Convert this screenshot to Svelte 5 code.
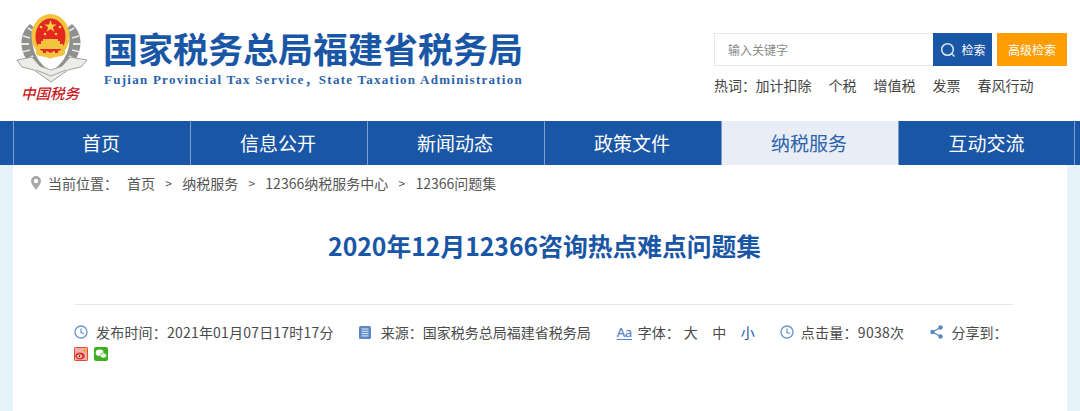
<script>
  const nav = ['首页', '信息公开', '新闻动态', '政策文件', '纳税服务', '互动交流'];
  const hot = ['加计扣除', '个税', '增值税', '发票', '春风行动'];
  const crumbs = ['首页', '纳税服务', '12366纳税服务中心', '12366问题集'];
</script>

<div class="page">
  <header class="head">
    <div class="brand">
      <div class="logo">
        <svg class="emblem" viewBox="0 0 80 76" width="80" height="76" aria-hidden="true">
          <path d="M20 16C8 26 8 46 24 60L36 60C22 48 20 32 25 20Z" fill="#8f918f"/>
          <path d="M62 16C74 26 74 46 58 60L46 60C60 48 62 32 57 20Z" fill="#8f918f"/>
          <path d="M18 20l5 3M13 28l7 2M11 36l8 0M12 44l8-2M16 52l7-4M64 20l-5 3M69 28l-7 2M71 36l-8 0M70 44l-8-2M66 52l-7-4" stroke="#e8e8e6" stroke-width="1.800"/>
          <path d="M7 52L22 49L30 58L41 62L52 58L60 49L77 52L71 59L58 62L41 74L24 62L12 59Z" fill="#ecece9" stroke="#8c8c8a" stroke-width=".8"/>
          <path d="M26 62L41 68L56 62" fill="none" stroke="#a5a5a3" stroke-width="1"/>
          <ellipse cx="40.500" cy="28" rx="19" ry="22" fill="#f3c440"/>
          <ellipse cx="40.500" cy="28.500" rx="15" ry="18" fill="#e5281f"/>
          <path d="M40.500 12l1.500 4.500h4.600l-3.700 2.800 1.400 4.500-3.800-2.800-3.800 2.800 1.400-4.500-3.700-2.800h4.600Z" fill="#f8d24a"/>
          <circle cx="31" cy="19" r="1.300" fill="#f8d24a"/><circle cx="50" cy="19" r="1.300" fill="#f8d24a"/>
          <circle cx="35" cy="26" r="1.300" fill="#f8d24a"/><circle cx="46" cy="26" r="1.300" fill="#f8d24a"/>
          <path d="M33 31h15v2h2v3h3v5H28v-5h3v-3h2Z" fill="#f3c440"/>
          <path d="M26 40c5 5 9 1 14.500 5 5.500-4 9.500 0 14.500-5v6c-5 4-10 1-14.500 5-4.500-4-9.500-1-14.500-5Z" fill="#f3c440"/>
          <path d="M33 42h3v3h-3ZM45 42h3v3h-3Z" fill="#e5281f"/>
        </svg>
        <div class="seal">中国税务</div>
      </div>
      <div class="names">
        <div class="cn">国家税务总局福建省税务局</div>
        <div class="en">Fujian Provincial Tax Service，State Taxation Administration</div>
      </div>
    </div>
    <div class="tools">
      <div class="search">
        <div class="field">输入关键字</div>
        <button class="go">
          <svg viewBox="0 0 16 16" width="16" height="16" aria-hidden="true"><circle cx="7.500" cy="7.500" r="5.800" fill="none" stroke="#dbe6f4" stroke-width="1.500"/><path d="M11.800 11.800l2.700 2.700" stroke="#dbe6f4" stroke-width="1.500"/></svg>
          检索
        </button>
        <button class="adv">高级检索</button>
      </div>
      <div class="hot">
        <span class="hot-label">热词：</span>
        {#each hot as h}<span class="hot-item">{h}</span>{/each}
      </div>
    </div>
  </header>

  <nav class="nav">
    {#each nav as n, i}
      <div class="tab" class:on={i === 4}>{n}</div>
    {/each}
  </nav>

  <main class="sheet">
    <div class="crumbs">
      <svg viewBox="0 0 10 14" width="10" height="14" aria-hidden="true"><path fill-rule="evenodd" d="M5 0a5 5 0 0 1 5 5c0 3-3 6-5 9-2-3-5-6-5-9a5 5 0 0 1 5-5Zm0 2.800a2.200 2.200 0 1 0 0 4.400 2.200 2.200 0 0 0 0-4.400Z" fill="#a8a8a8"/></svg>
      <span class="here">当前位置：</span>
      {#each crumbs as c, i}
        {#if i > 0}<span class="sep">&gt;</span>{/if}
        <span>{c}</span>
      {/each}
    </div>

    <h1 class="title">2020年12月12366咨询热点难点问题集</h1>

    <div class="rule"></div>

    <div class="meta">
      <svg class="ic" viewBox="0 0 14 14" width="14" height="14" aria-hidden="true"><circle cx="7" cy="7" r="6" fill="none" stroke="#6e97cf" stroke-width="1.400"/><path d="M7 3.500V7.500l2.800 1.200" fill="none" stroke="#6e97cf" stroke-width="1.300"/></svg>
      <span class="t1">发布时间：2021年01月07日17时17分</span>
      <svg class="ic m2" viewBox="0 0 12 13" width="12" height="13" aria-hidden="true"><rect width="12" height="13" rx="1.500" fill="#5b87c4"/><path d="M2.500 3h7M2.500 5.300h7M2.500 7.600h7M2.500 9.900h7" stroke="#e8eff8" stroke-width="1"/></svg>
      <span class="t2">来源：国家税务总局福建省税务局</span>
      <span class="aa">Aa</span>
      <span class="t3">字体：</span>
      <span class="size">大</span><span class="size">中</span><span class="size small">小</span>
      <svg class="ic m4" viewBox="0 0 14 14" width="14" height="14" aria-hidden="true"><circle cx="7" cy="7" r="6" fill="none" stroke="#6e97cf" stroke-width="1.400"/><path d="M7 3.500V7.500l2.800 1.200" fill="none" stroke="#6e97cf" stroke-width="1.300"/></svg>
      <span class="t4">点击量：9038次</span>
      <svg class="ic m5" viewBox="0 0 13 14" width="13" height="14" aria-hidden="true"><path d="M10.500 2.500L2.500 7l8 4.500" fill="none" stroke="#5b87c4" stroke-width="1.300"/><circle cx="10.500" cy="2.500" r="2.200" fill="#5b87c4"/><circle cx="2.500" cy="7" r="2.200" fill="#5b87c4"/><circle cx="10.500" cy="11.500" r="2.200" fill="#5b87c4"/></svg>
      <span class="t5">分享到：</span>
    </div>

    <div class="share">
      <svg viewBox="0 0 14 14" width="14" height="14" aria-hidden="true"><rect width="14" height="14" rx="1.500" fill="#f3b0a8"/><rect x=".5" y=".5" width="13" height="13" rx="1" fill="none" stroke="#e2483c"/><circle cx="10.500" cy="3.500" r="2" fill="#f4a64a"/><ellipse cx="6" cy="9" rx="4.800" ry="3.400" fill="#e2332a"/><ellipse cx="5.600" cy="9.200" rx="2.400" ry="1.800" fill="#fff"/><circle cx="5.500" cy="9.300" r="1" fill="#222"/></svg>
      <svg viewBox="0 0 14 14" width="14" height="14" aria-hidden="true"><rect width="14" height="14" rx="2" fill="#3fae1f"/><ellipse cx="5.600" cy="5.800" rx="3.900" ry="3.200" fill="#fff"/><ellipse cx="9.400" cy="8.500" rx="3.200" ry="2.600" fill="#e6f6df" stroke="#3fae1f" stroke-width=".6"/></svg>
    </div>
  </main>
</div>

<style>
  :global(body) { margin: 0; background: #fff; }
  .page {
    width: 1080px;
    height: 411px;
    overflow: hidden;
    background: #e6f3fb;
    font-family: "Noto Sans CJK SC", "Liberation Sans", sans-serif;
    font-size: 14px;
    color: #4a4a4a;
  }
  .head {
    height: 121px;
    box-sizing: border-box;
    background: #fff;
    display: flex;
    justify-content: space-between;
    padding: 0 13px 0 13px;
  }
  .brand { display: flex; }
  .logo { width: 80px; padding-top: 8px; margin-left: -3px; }
  .emblem { display: block; filter: blur(.4px); }
  .seal {
    margin: -3px 0 0 11px;
    width: 60px;
    font: italic 500 14.500px/24px "Noto Sans CJK SC", sans-serif;
    color: #c9161d;
    white-space: nowrap;
  }
  .names { margin-left: 13px; padding-top: 26px; }
  .cn {
    font-size: 35px;
    line-height: 44px;
    font-weight: 700;
    color: #1a56a6;
    white-space: nowrap;
  }
  .en {
    margin: 2px 0 0 1px;
    font: 700 13px/16px "Liberation Serif", "Noto Sans CJK SC", serif;
    letter-spacing: 1.260px;
    color: #2b62ab;
    white-space: nowrap;
  }
  .tools { width: 353px; padding-top: 33px; }
  .search { display: flex; height: 33px; }
  .field {
    width: 219px;
    box-sizing: border-box;
    border: 1px solid #e8e8e8;
    border-right: 0;
    padding-left: 13px;
    font-size: 12px;
    line-height: 31px;
    color: #8a8a8a;
  }
  button {
    border: 0;
    padding: 0;
    margin: 0;
    color: #fff;
    font-family: inherit;
    font-size: 12px;
    cursor: pointer;
  }
  .go {
    width: 59px;
    background: #1a56a6;
    display: flex;
    align-items: center;
    justify-content: center;
    gap: 5px;
    padding-left: 1px;
    box-sizing: border-box;
  }
  .adv { width: 70px; margin-left: 5px; background: #ff9c00; }
  .hot { margin-top: 7px; display: flex; line-height: 24px; white-space: nowrap; color: #444; }
  .hot-label { width: 41.500px; }
  .hot-item { margin-right: 17px; }
  .nav {
    height: 44px;
    background: #1a56a6;
    display: flex;
    padding-left: 13px;
  }
  .tab {
    width: 177px;
    box-sizing: border-box;
    border-left: 1px solid #7e9fcb;
    padding-right: 2px;
    text-align: center;
    font-size: 19px;
    line-height: 44px;
    color: #fff;
  }
  .tab.on { background: #e8edf6; color: #2b62ab; }
  .tab:last-child { border-right: 1px solid #7e9fcb; padding-right: 0; }
  .sheet {
    width: 1054px;
    height: 246px;
    margin-left: 13px;
    background: #fff;
    position: relative;
    overflow: hidden;
  }
  .crumbs {
    display: flex;
    align-items: center;
    height: 35px;
    padding-left: 18px;
    white-space: nowrap;
    line-height: 20px;
    color: #555;
  }
  .here { margin: 0 9px 0 7px; }
  .sep { margin: 0 10.250px; font-size: 12px; }
  .title {
    margin: 29px 0 0;
    padding-left: 9px;
    text-align: center;
    font-size: 24.750px;
    line-height: 32px;
    font-weight: 700;
    color: #1a56a6;
  }
  .rule { margin: 43px 0 0 62px; width: 938px; height: 1px; background: #e6e6e6; }
  .meta {
    display: flex;
    align-items: center;
    margin-top: 17px;
    padding-left: 61px;
    height: 20px;
    white-space: nowrap;
    color: #4a4a4a;
  }
  .ic { flex: none; }
  .t1 { margin-left: 8px; letter-spacing: .2px; }
  .m2 { margin-left: 25px; }
  .t2 { margin-left: 10px; }
  .aa {
    margin-left: 26px;
    width: 15px;
    font: 500 13px/14px "Noto Sans", sans-serif;
    letter-spacing: -.3px;
    color: #5b87c4;
    border-bottom: 1px solid #5b87c4;
  }
  .t3 { margin: 0 4px 0 6px; }
  .size { margin-right: 14.500px; }
  .small { color: #1a56a6; }
  .m4 { margin-left: 10.500px; }
  .t4 { margin-left: 7px; letter-spacing: .3px; }
  .m5 { margin-left: 26px; }
  .t5 { margin-left: 8px; }
  .share { display: flex; gap: 6px; margin-top: 5px; padding-left: 61px; }
</style>
